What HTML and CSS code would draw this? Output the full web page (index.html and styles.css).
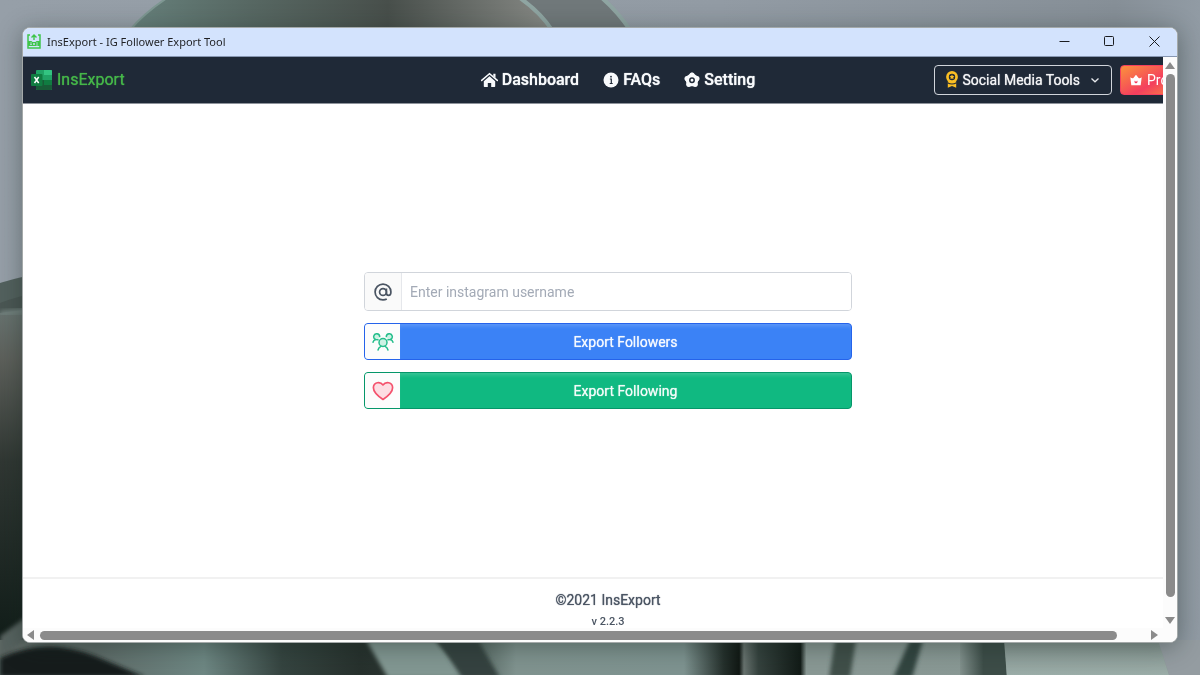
FILE: index.html
```html
<!DOCTYPE html>
<html lang="en">
<head>
<meta charset="utf-8">
<meta name="viewport" content="width=device-width, initial-scale=1">
<title>InsExport - IG Follower Export Tool</title>
<link rel="stylesheet" href="styles.css">
</head>
<body>
<svg class="wallpaper" viewBox="0 0 1200 675" preserveAspectRatio="none" aria-hidden="true">
  <defs>
    <linearGradient id="sky" x1="0" y1="0" x2="1" y2="0"><stop offset="0" stop-color="#969fa8"/><stop offset=".6" stop-color="#929ba4"/><stop offset=".93" stop-color="#868f97"/><stop offset="1" stop-color="#919ba4"/></linearGradient>
    <linearGradient id="petal" x1="0" y1="0" x2="1" y2="0"><stop offset="0" stop-color="#66807b"/><stop offset=".3" stop-color="#566661"/><stop offset=".6" stop-color="#484f4b"/><stop offset="1" stop-color="#8a8c88"/></linearGradient>
    <linearGradient id="side" x1="0" y1="0" x2="0" y2="1"><stop offset="0" stop-color="#687471"/><stop offset=".15" stop-color="#5d605b"/><stop offset=".45" stop-color="#303733"/><stop offset="1" stop-color="#101c18"/></linearGradient>
    <linearGradient id="strip" x1="0" y1="0" x2="1" y2="0">
      <stop offset="0" stop-color="#626c68"/><stop offset=".08" stop-color="#5e6b68"/><stop offset=".17" stop-color="#6e8783"/><stop offset=".235" stop-color="#354440"/><stop offset=".3" stop-color="#27312d"/><stop offset=".36" stop-color="#2c3733"/><stop offset=".4" stop-color="#5b6c67"/><stop offset=".43" stop-color="#80938f"/><stop offset=".57" stop-color="#7e9390"/><stop offset=".603" stop-color="#25302c"/><stop offset=".616" stop-color="#111814"/><stop offset=".62" stop-color="#68736f"/><stop offset=".632" stop-color="#35423e"/><stop offset=".667" stop-color="#121b17"/><stop offset=".672" stop-color="#899894"/><stop offset="1" stop-color="#899995"/>
    </linearGradient>
    <linearGradient id="fold" x1="0" y1="0" x2="1" y2="0"><stop offset="0" stop-color="#82918d"/><stop offset=".5" stop-color="#3d4d48"/><stop offset="1" stop-color="#3d4d48"/></linearGradient>
    <linearGradient id="mint" x1="0" y1="0" x2="0" y2="1"><stop offset="0" stop-color="#84938f"/><stop offset="1" stop-color="#9dafaa"/></linearGradient>
    <filter id="soft" x="-10%" y="-10%" width="120%" height="120%"><feGaussianBlur stdDeviation="2"/></filter>
  </defs>
  <rect width="1200" height="675" fill="url(#sky)"/>
  <path d="M130 30Q145 12 170 -4H520L560 30Z" fill="url(#petal)"/>
  <path d="M520 -2Q540 12 552 30H630Q618 12 602 -2Z" fill="#70787a"/>
  <path d="M520 -2Q540 12 552 30M602 -2Q618 12 630 30" fill="none" stroke="#8fa5a2" stroke-width="4"/>
  <path d="M130 30Q145 12 170 -4" fill="none" stroke="#7e9792" stroke-width="2"/>
  <path d="M0 283Q12 279 40 273V650H0Z" fill="#53615e"/>
  <path d="M0 303Q15 297 40 292V650H0Z" fill="#4b5754"/>
  <path d="M0 313L40 308V650H0Z" fill="url(#side)"/>
  <path d="M0 314L40 309" stroke="#71807d" stroke-width="6" filter="url(#soft)"/>
  <rect y="640" width="1200" height="35" fill="url(#strip)"/>
  <path d="M0 636L26 617V640L0 660Z" fill="#57625e" filter="url(#soft)"/>
  <path d="M0 658Q45 636 95 656L145 677H0Z" fill="#171f1b" filter="url(#soft)"/>
  <path d="M366 640L388 678H470L435 640Z" fill="#829792" filter="url(#soft)"/>
  <path d="M438 640H478L500 678H462Z" fill="#35433f" filter="url(#soft)"/>
  <path d="M835 640H856L850 678H829Z" fill="#3f4f4a" filter="url(#soft)"/>
  <path d="M910 640H923L912 678H893Z" fill="#33443f" filter="url(#soft)"/>
  <path d="M960 640H1005L1007 678H960Z" fill="url(#fold)"/>
  <path d="M1004 640H1158L1170 678H1007Z" fill="url(#mint)"/>
  <path d="M1158 640H1200V678H1170Z" fill="#949ca1"/>
</svg>

<div class="desktop">
  <div class="window">
    <div class="titlebar">
      <svg class="app-icon" viewBox="0 0 14 15" aria-hidden="true"><path d="M3 1H1V14H13V1H11" fill="none" stroke="#3fc54b" stroke-width="1.500"/><path d="M7 6V1.500M4.500 3.500L7 1L9.500 3.500" fill="none" stroke="#3fc54b" stroke-width="1.400"/><path d="M1 7H4.500L5.500 8H8.500L9.500 7H13V12H1Z" fill="#3fc54b"/><path d="M3 9H5M3 10.500H5M6 9L8 11M8 9L6 11M9 9H11M9 11H11" stroke="#d3e3fd" stroke-width=".7"/></svg>
      <span class="title">InsExport - IG Follower Export Tool</span>
      <div class="controls">
        <button class="control" aria-label="Minimize"><svg viewBox="0 0 11 11"><path d="M.5 5.500H10.500"/></svg></button>
        <button class="control" aria-label="Maximize"><svg viewBox="0 0 11 11"><rect x=".5" y=".5" width="9" height="9" rx="1"/></svg></button>
        <button class="control" aria-label="Close"><svg viewBox="0 0 11 11"><path d="M.5 .5L10.500 10.500M10.500 .5L.5 10.500"/></svg></button>
      </div>
    </div>
    <div class="frame">
      <div class="viewport">
        <div class="page">
          <header class="header">
            <a class="brand" href="#">
              <svg class="brand-icon" viewBox="0 0 21 20" aria-hidden="true"><rect x="5" width="16" height="20" rx="1" fill="#21a366"/><path d="M13 0H20Q21 0 21 1V5H13Z" fill="#33c481"/><path d="M5 5H13V10H5Z" fill="#21a366"/><path d="M5 10H13V15H5Z" fill="#185c37"/><path d="M13 10H21V15H13Z" fill="#107c41"/><path d="M5 15H21V19Q21 20 20 20H6Q5 20 5 19Z" fill="#185c37"/><rect y="4" width="11.500" height="12" rx="1" fill="#107c41"/><path d="M3.500 7L7.700 13M7.700 7L3.500 13" stroke="#fff" stroke-width="1.500"/></svg>
              <span>InsExport</span>
            </a>
            <nav class="nav">
              <a href="#"><svg class="home" viewBox="0 0 17 16" aria-hidden="true"><path d="M.7 8.400L8.500 1.700L16.300 8.400" fill="none" stroke="#f8fafc" stroke-width="1.500" stroke-linecap="round"/><path d="M12.300 1.700H14.500V6L12.300 4.100ZM8.500 4.300L14.200 9.200V14.300Q14.200 15 13.500 15H10.200V11H6.800V15H3.500Q2.800 15 2.800 14.300V9.200Z" fill="#f8fafc"/></svg>Dashboard</a>
              <a href="#"><svg viewBox="0 0 16 16" aria-hidden="true"><circle cx="8" cy="8" r="7.500" fill="#f8fafc"/><path d="M6.900 7H8.300V11.200M6.700 11.500H9.700" fill="none" stroke="#1f2937" stroke-width="1.200"/><circle cx="8" cy="4.700" r=".9" fill="#1f2937"/></svg>FAQs</a>
              <a href="#"><svg viewBox="0 0 16 16" aria-hidden="true"><path d="M8 1.900L13.800 6.100L11.600 13H4.400L2.200 6.100Z" fill="#f8fafc" stroke="#f8fafc" stroke-width="2.500" stroke-linejoin="round"/><g fill="#f8fafc"><circle cx="8" cy="3.100" r="2.600"/><circle cx="12.900" cy="6.500" r="2.600"/><circle cx="11.200" cy="12.300" r="2.600"/><circle cx="4.800" cy="12.300" r="2.600"/><circle cx="3.100" cy="6.500" r="2.600"/></g><circle cx="8" cy="8.200" r="2.200" fill="none" stroke="#1f2937" stroke-width="1.500"/></svg>Setting</a>
            </nav>
            <div class="actions">
              <button class="tools"><svg class="medal" viewBox="0 0 12 17" aria-hidden="true"><path d="M1.800 10.500V16.800L6 15L10.200 16.800V10.500Z" fill="#fbbf24"/><path d="M1.500 11.700Q6 14.300 10.500 11.700" fill="none" stroke="#1f2937" stroke-width="1.200"/><circle cx="6" cy="6" r="5.900" fill="#fbbf24"/><circle cx="6" cy="6" r="3.200" fill="#1f2937"/><path d="M6 3.600L6.800 5.100L8.400 5.300L7.200 6.500L7.500 8.100L6 7.400L4.500 8.100L4.800 6.500L3.600 5.300L5.200 5.100Z" fill="#fbbf24"/></svg>Social Media Tools<svg class="chevron" viewBox="0 0 10 10" aria-hidden="true"><path d="M1.500 3.500L5 6.800L8.500 3.500" fill="none" stroke="#e5e7eb" stroke-width="1.300"/></svg></button>
              <button class="pro"><svg class="crown" viewBox="0 0 12 12" aria-hidden="true"><path d="M.3 3.200Q2 4.600 3.400 4L6 .7L8.600 4Q10 4.600 11.700 3.200L10.700 11.300H1.300Z" fill="#fff"/><path d="M4.200 6.500Q4.400 9.200 6 9.200Q7.600 9.200 7.800 6.500L6.500 7.700L6 6.500L5.500 7.700Z" fill="#f43f5e"/></svg>Pro</button>
            </div>
          </header>
          <main class="main">
            <form class="form">
              <div class="field">
                <label class="at" for="username" aria-label="Instagram username"><svg viewBox="0 0 20 20" aria-hidden="true"><g fill="none" stroke="#4b5563" stroke-width="1.900"><circle cx="10" cy="10" r="3.800"/><path d="M13.800 6.200V11.200Q13.800 13.800 16.200 13.800Q18.800 13.800 18.800 10A8.800 8.800 0 1 0 10 18.800Q12.400 18.800 14.200 17.800"/></g></svg></label>
                <input id="username" type="text" placeholder="Enter instagram username">
              </div>
              <button class="export followers" type="button"><span class="export-icon"><svg viewBox="0 0 22 18" aria-hidden="true"><g fill="none" stroke="#26be8c" stroke-width="1.500" stroke-linecap="round" stroke-linejoin="round"><path d="M7.700 3.600A3 3 0 1 0 3.500 6.500L6 6.800M14.300 3.600A3 3 0 1 1 18.500 6.500L16 6.800" fill="#cdf2e4"/><path d="M3.500 6.500Q1.600 7.200 1 9.200M18.500 6.500Q20.400 7.200 21 9.200"/><circle cx="11" cy="9.500" r="4" fill="#cdf2e4"/><path d="M6 17Q6.700 14.300 9 13.400M16 17Q15.300 14.300 13 13.400"/></g></svg></span><span class="export-label">Export Followers</span></button>
              <button class="export following" type="button"><span class="export-icon"><svg viewBox="0 0 22 20" aria-hidden="true"><path d="M11 18.500Q1.400 12.100 1.400 6.800C1.400 .8 8.400 .3 11 3.900C13.600 .3 20.600 .8 20.600 6.800Q20.600 12.100 11 18.500Z" fill="#fddde3" stroke="#f4526d" stroke-width="1.700" stroke-linejoin="round"/></svg></span><span class="export-label">Export Following</span></button>
            </form>
          </main>
          <footer class="footer">
            <p class="copyright">©2021 InsExport</p>
            <p class="version">v 2.2.3</p>
          </footer>
        </div>
      </div>
      <div class="bar-v" aria-hidden="true"><i class="arrow up"></i><i class="thumb"></i><i class="arrow down"></i></div>
      <div class="bar-h" aria-hidden="true"><i class="arrow left"></i><i class="thumb"></i><i class="arrow right"></i></div>
    </div>
  </div>
</div>
</body>
</html>
```

FILE: styles.css
```css
* { box-sizing: border-box; }
body { margin: 0; background: #8f98a1; font-family: Roboto, "Liberation Sans", sans-serif; }
button, input { font: inherit; margin: 0; }
button { cursor: pointer; }
svg { display: block; flex: none; }

.wallpaper { position: fixed; inset: 0; width: 100%; height: 100%; }

.desktop { display: flex; min-height: 100vh; padding: 27px 22px 32px; }
.window {
  position: relative;
  display: flex; flex: 1; flex-direction: column; min-width: 0;
  overflow: hidden;
  border: 1px solid #a4a9a9; border-radius: 8px;
  background: #fff;
  box-shadow: 0 4px 24px rgba(20, 35, 30, .4);
}

.titlebar { display: flex; align-items: center; height: 29px; padding: 0 0 2px 4px; background: #d3e3fd; border-bottom: 1px solid #8797b2; }
.app-icon { width: 14px; height: 15px; }
.title { margin-left: 6px; color: #1f2023; font-family: "Noto Sans", sans-serif; font-size: 11px; white-space: nowrap; }
.controls { display: flex; margin-left: auto; }
.control { display: grid; place-items: center; width: 45px; height: 26px; padding: 0; border: 0; background: none; }
.control svg { width: 11px; height: 11px; fill: none; stroke: #1a1c20; stroke-width: 1; }

.frame { display: grid; flex: 1; grid-template: minmax(0, 1fr) 14px / minmax(0, 1fr) 14px; background: #fcfcfc; }
.viewport { display: flex; overflow: hidden; background: #fff; }
.page { display: flex; flex: none; flex-direction: column; width: calc(100% + 30px); }

.header { display: grid; grid-template-columns: 1fr auto 1fr; align-items: center; height: 47px; padding: 0 8px 1px; background: #1f2937; border-bottom: 1px solid #8e939b; }
.brand { display: flex; align-items: center; gap: 5px; color: #45b649; font-size: 16px; text-decoration: none; text-shadow: 0 0 1px; }
.brand-icon { width: 21px; height: 20px; }
.nav { display: flex; }
.nav a { display: flex; align-items: center; gap: 4px; padding: 0 2px 0 22px; color: #f8fafc; font-size: 16px; font-weight: 500; text-decoration: none; text-shadow: 0 0 1px; }
.nav svg { width: 16px; height: 16px; }
.nav .home { width: 17px; }
.actions { display: flex; justify-content: flex-end; gap: 8px; }
.tools { display: flex; align-items: center; height: 30px; padding: 0 11px; border: 1px solid #d1d5db; border-radius: 4px; background: none; color: #f3f4f6; font-size: 14px; text-shadow: 0 0 1px; white-space: nowrap; }
.medal { width: 12px; height: 17px; margin-right: 4px; }
.chevron { width: 10px; height: 10px; margin-left: 10px; }
.pro { display: flex; align-items: center; gap: 5px; width: 65px; height: 30px; padding: 0 9px; border: 1px solid #f43f5e; border-radius: 4px; background: linear-gradient(150deg, #fb923c, #f43f5e 55%, #fb923c); color: #fff; font-size: 14px; }
.crown { width: 12px; height: 12px; }

.main { display: grid; flex: 1; place-items: center; }
.form { display: grid; gap: 12px; width: 488px; max-width: 90%; font-size: 14px; }
.field { display: flex; height: 39px; overflow: hidden; border: 1px solid #d1d5db; border-radius: 4px; }
.at { display: grid; place-items: center; width: 37px; border-right: 1px solid #e5e7eb; background: #fafafa; }
.at svg { width: 18px; height: 18px; }
.field input { flex: 1; min-width: 0; padding: 0 8px; border: 0; outline: 0; background: #fff; color: #374151; }
.field input::placeholder { color: #a3aab6; opacity: 1; }
.export { display: flex; height: 37px; padding: 0; overflow: hidden; border: 1px solid; border-radius: 4px; color: #fff; text-shadow: 0 0 1px; }
.followers { border-color: #2563eb; background: #3b82f6; }
.following { border-color: #059669; background: #10b981; }
.export-icon { display: grid; place-items: center; align-self: stretch; width: 35px; background: #fcfcfc; }
.export-icon svg { width: 22px; height: 18px; }
.following .export-icon svg { height: 20px; }
.export-label { display: grid; flex: 1; align-self: stretch; place-items: center; box-shadow: inset 0 4px 4px -2px rgba(255, 255, 255, .2); opacity: .95; }

.footer { height: 51px; padding-top: 11px; border-top: 2px solid #f1f1f1; color: #4b5563; text-align: center; }
.footer p { margin: 0; line-height: 20px; }
.copyright { font-size: 14px; text-shadow: 0 0 1px; }
.footer .version { margin-top: 2px; font-size: 11px; font-weight: 500; }

.thumb { border-radius: 5px; background: #8b8b8b; }
.arrow { width: 0; height: 0; border: 5px solid transparent; }
.bar-v { display: flex; flex-direction: column; align-items: center; }
.bar-v .thumb { flex: 1; width: 9px; margin: 5px 0 20px; }
.bar-h { display: flex; align-items: center; }
.bar-h .thumb { flex: 1; height: 9px; margin: 0 34px 0 6px; }
.up { margin-top: 5px; border-width: 0 5px 7px; border-bottom-color: #8b8b8b; }
.down { margin-bottom: 4px; border-width: 7px 5px 0; border-top-color: #8b8b8b; }
.left { margin-left: 4px; border-width: 5px 7px 5px 0; border-right-color: #8b8b8b; }
.right { margin-right: 5px; border-width: 5px 0 5px 7px; border-left-color: #8b8b8b; }
```
